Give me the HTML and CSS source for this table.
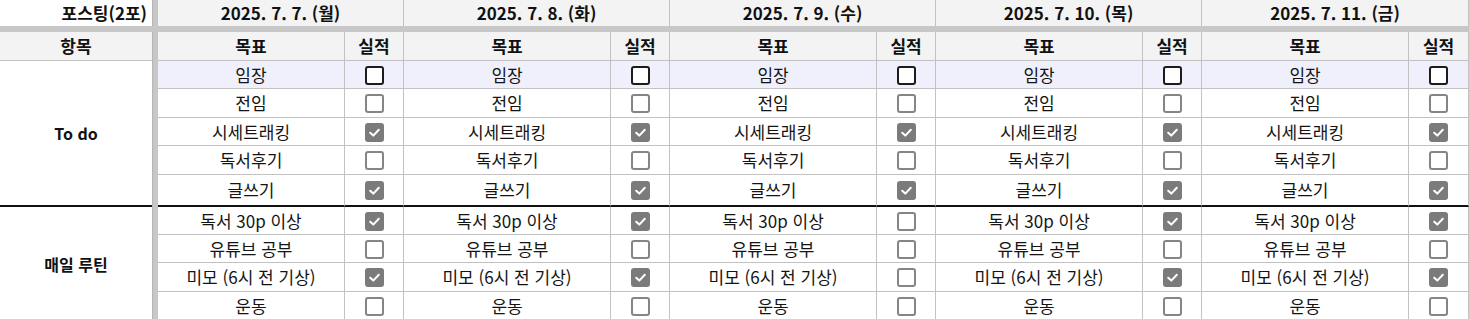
FILE: index.html
```html
<!DOCTYPE html>
<html lang="ko">
<head>
<meta charset="utf-8">
<title>포스팅 체크리스트</title>
<link rel="stylesheet" href="styles.css">
</head>
<body>
<table class="sheet">
  <colgroup>
    <col class="w-lead"><col class="w-bar">
    <col class="w-goal1"><col class="w-done">
    <col class="w-goal"><col class="w-done">
    <col class="w-goal"><col class="w-done">
    <col class="w-goal"><col class="w-done">
    <col class="w-goal"><col class="w-done-last">
  </colgroup>
  <tr class="r-date">
    <th class="lead">포스팅(2포)</th><td class="bar"></td>
    <th class="date" colspan="2">2025. 7. 7. (월)</th>
    <th class="date" colspan="2">2025. 7. 8. (화)</th>
    <th class="date" colspan="2">2025. 7. 9. (수)</th>
    <th class="date" colspan="2">2025. 7. 10. (목)</th>
    <th class="date" colspan="2">2025. 7. 11. (금)</th>
  </tr>
  <tr class="band"><td colspan="12"></td></tr>
  <tr class="r-head">
    <th class="lead-h">항목</th><td class="bar"></td>
    <th class="goal">목표</th><th class="done">실적</th>
    <th class="goal">목표</th><th class="done">실적</th>
    <th class="goal">목표</th><th class="done">실적</th>
    <th class="goal">목표</th><th class="done">실적</th>
    <th class="goal">목표</th><th class="done">실적</th>
  </tr>
  <tr class="r28 first">
    <th class="grp todo" rowspan="5">To do</th><td class="bar"></td>
    <td class="goal">임장</td><td class="done"><span class="cb dark"></span></td>
    <td class="goal">임장</td><td class="done"><span class="cb dark"></span></td>
    <td class="goal">임장</td><td class="done"><span class="cb dark"></span></td>
    <td class="goal">임장</td><td class="done"><span class="cb dark"></span></td>
    <td class="goal">임장</td><td class="done"><span class="cb dark"></span></td>
  </tr>
  <tr class="r29">
    <td class="bar"></td>
    <td class="goal">전임</td><td class="done"><span class="cb"></span></td>
    <td class="goal">전임</td><td class="done"><span class="cb"></span></td>
    <td class="goal">전임</td><td class="done"><span class="cb"></span></td>
    <td class="goal">전임</td><td class="done"><span class="cb"></span></td>
    <td class="goal">전임</td><td class="done"><span class="cb"></span></td>
  </tr>
  <tr class="r28">
    <td class="bar"></td>
    <td class="goal">시세트래킹</td><td class="done"><span class="cb on"><svg viewBox="0 0 15 15"><path d="M3.2 7.7 L6.3 10.6 L11.8 4.7"/></svg></span></td>
    <td class="goal">시세트래킹</td><td class="done"><span class="cb on"><svg viewBox="0 0 15 15"><path d="M3.2 7.7 L6.3 10.6 L11.8 4.7"/></svg></span></td>
    <td class="goal">시세트래킹</td><td class="done"><span class="cb on"><svg viewBox="0 0 15 15"><path d="M3.2 7.7 L6.3 10.6 L11.8 4.7"/></svg></span></td>
    <td class="goal">시세트래킹</td><td class="done"><span class="cb on"><svg viewBox="0 0 15 15"><path d="M3.2 7.7 L6.3 10.6 L11.8 4.7"/></svg></span></td>
    <td class="goal">시세트래킹</td><td class="done"><span class="cb on"><svg viewBox="0 0 15 15"><path d="M3.2 7.7 L6.3 10.6 L11.8 4.7"/></svg></span></td>
  </tr>
  <tr class="r29">
    <td class="bar"></td>
    <td class="goal">독서후기</td><td class="done"><span class="cb"></span></td>
    <td class="goal">독서후기</td><td class="done"><span class="cb"></span></td>
    <td class="goal">독서후기</td><td class="done"><span class="cb"></span></td>
    <td class="goal">독서후기</td><td class="done"><span class="cb"></span></td>
    <td class="goal">독서후기</td><td class="done"><span class="cb"></span></td>
  </tr>
  <tr class="r32 sep">
    <td class="bar"></td>
    <td class="goal">글쓰기</td><td class="done"><span class="cb on"><svg viewBox="0 0 15 15"><path d="M3.2 7.7 L6.3 10.6 L11.8 4.7"/></svg></span></td>
    <td class="goal">글쓰기</td><td class="done"><span class="cb on"><svg viewBox="0 0 15 15"><path d="M3.2 7.7 L6.3 10.6 L11.8 4.7"/></svg></span></td>
    <td class="goal">글쓰기</td><td class="done"><span class="cb on"><svg viewBox="0 0 15 15"><path d="M3.2 7.7 L6.3 10.6 L11.8 4.7"/></svg></span></td>
    <td class="goal">글쓰기</td><td class="done"><span class="cb on"><svg viewBox="0 0 15 15"><path d="M3.2 7.7 L6.3 10.6 L11.8 4.7"/></svg></span></td>
    <td class="goal">글쓰기</td><td class="done"><span class="cb on"><svg viewBox="0 0 15 15"><path d="M3.2 7.7 L6.3 10.6 L11.8 4.7"/></svg></span></td>
  </tr>
  <tr class="r28">
    <th class="grp" rowspan="4">매일 루틴</th><td class="bar"></td>
    <td class="goal">독서 30p 이상</td><td class="done"><span class="cb on"><svg viewBox="0 0 15 15"><path d="M3.2 7.7 L6.3 10.6 L11.8 4.7"/></svg></span></td>
    <td class="goal">독서 30p 이상</td><td class="done"><span class="cb on"><svg viewBox="0 0 15 15"><path d="M3.2 7.7 L6.3 10.6 L11.8 4.7"/></svg></span></td>
    <td class="goal">독서 30p 이상</td><td class="done"><span class="cb"></span></td>
    <td class="goal">독서 30p 이상</td><td class="done"><span class="cb on"><svg viewBox="0 0 15 15"><path d="M3.2 7.7 L6.3 10.6 L11.8 4.7"/></svg></span></td>
    <td class="goal">독서 30p 이상</td><td class="done"><span class="cb on"><svg viewBox="0 0 15 15"><path d="M3.2 7.7 L6.3 10.6 L11.8 4.7"/></svg></span></td>
  </tr>
  <tr class="r28">
    <td class="bar"></td>
    <td class="goal">유튜브 공부</td><td class="done"><span class="cb"></span></td>
    <td class="goal">유튜브 공부</td><td class="done"><span class="cb"></span></td>
    <td class="goal">유튜브 공부</td><td class="done"><span class="cb"></span></td>
    <td class="goal">유튜브 공부</td><td class="done"><span class="cb"></span></td>
    <td class="goal">유튜브 공부</td><td class="done"><span class="cb"></span></td>
  </tr>
  <tr class="r29">
    <td class="bar"></td>
    <td class="goal">미모 (6시 전 기상)</td><td class="done"><span class="cb on"><svg viewBox="0 0 15 15"><path d="M3.2 7.7 L6.3 10.6 L11.8 4.7"/></svg></span></td>
    <td class="goal">미모 (6시 전 기상)</td><td class="done"><span class="cb on"><svg viewBox="0 0 15 15"><path d="M3.2 7.7 L6.3 10.6 L11.8 4.7"/></svg></span></td>
    <td class="goal">미모 (6시 전 기상)</td><td class="done"><span class="cb"></span></td>
    <td class="goal">미모 (6시 전 기상)</td><td class="done"><span class="cb on"><svg viewBox="0 0 15 15"><path d="M3.2 7.7 L6.3 10.6 L11.8 4.7"/></svg></span></td>
    <td class="goal">미모 (6시 전 기상)</td><td class="done"><span class="cb on"><svg viewBox="0 0 15 15"><path d="M3.2 7.7 L6.3 10.6 L11.8 4.7"/></svg></span></td>
  </tr>
  <tr class="r28">
    <td class="bar"></td>
    <td class="goal">운동</td><td class="done"><span class="cb"></span></td>
    <td class="goal">운동</td><td class="done"><span class="cb"></span></td>
    <td class="goal">운동</td><td class="done"><span class="cb"></span></td>
    <td class="goal">운동</td><td class="done"><span class="cb"></span></td>
    <td class="goal">운동</td><td class="done"><span class="cb"></span></td>
  </tr>
</table>
</body>
</html>
```
FILE: styles.css
```css
html, body {
  margin: 0;
  padding: 0;
  background: #ffffff;
}
body {
  font-family: "Noto Sans CJK KR", "Noto Sans", sans-serif;
  color: #141414;
  overflow: hidden;
}
.sheet {
  border-collapse: separate;
  border-spacing: 0;
  table-layout: fixed;
  width: 1469px;
}
.w-lead { width: 152px; }
.w-bar { width: 6px; }
.w-goal1 { width: 187px; }
.w-goal { width: 207px; }
.w-done { width: 59px; }
.w-done-last { width: 60px; }

.sheet th,
.sheet td {
  padding: 0;
  text-align: center;
  vertical-align: middle;
  font-size: 17px;
  line-height: 20px;
  font-weight: 400;
  white-space: nowrap;
  overflow: hidden;
}
.sheet th { font-weight: 700; color: #111111; }

.bar {
  background: #c7c7c7;
  border-left: 1px solid #b6b6b6;
}

/* date header */
.r-date { height: 26px; }
.r-date .lead {
  text-align: right;
  padding-right: 5px;
  background: #ffffff;
}
.r-date .date {
  background: #f3f3f3;
  border-right: 1px solid #c2c2c2;
}

/* separator band */
.band td {
  height: 6px;
  background: #c7c7c7;
}

/* column header */
.r-head { height: 29px; }
.r-head th {
  background: #f3f3f3;
  border-bottom: 1px solid #c2c2c2;
}
.r-head .goal,
.r-head .done { border-right: 1px solid #c2c2c2; }

/* data rows */
.r28 { height: 28px; }
.r29 { height: 29px; }
.r32 { height: 32px; }

td.goal,
td.done {
  border-right: 1px solid #c2c2c2;
  border-bottom: 1px solid #c2c2c2;
}
.first td.goal,
.first td.done { background: #eff0fc; }

.sep td.goal,
.sep td.done { border-bottom: 2px solid #111111; }

.grp {
  background: #ffffff;
  font-size: 16px;
}
.sheet .grp { font-size: 16px; }
.grp.todo { border-bottom: 2px solid #111111; }

/* checkboxes */
.cb {
  display: block;
  box-sizing: border-box;
  width: 19px;
  height: 19px;
  margin: 1px auto 0;
  border: 2px solid #858585;
  border-radius: 3px;
  background: #ffffff;
}
.cb.dark { border-color: #1c1c1c; }
.cb.on {
  background: #7b7b7b;
  border-color: #7b7b7b;
}
.cb svg {
  display: block;
  width: 15px;
  height: 15px;
}
.cb svg path {
  fill: none;
  stroke: #ffffff;
  stroke-width: 2;
  stroke-linecap: round;
  stroke-linejoin: round;
}
```
